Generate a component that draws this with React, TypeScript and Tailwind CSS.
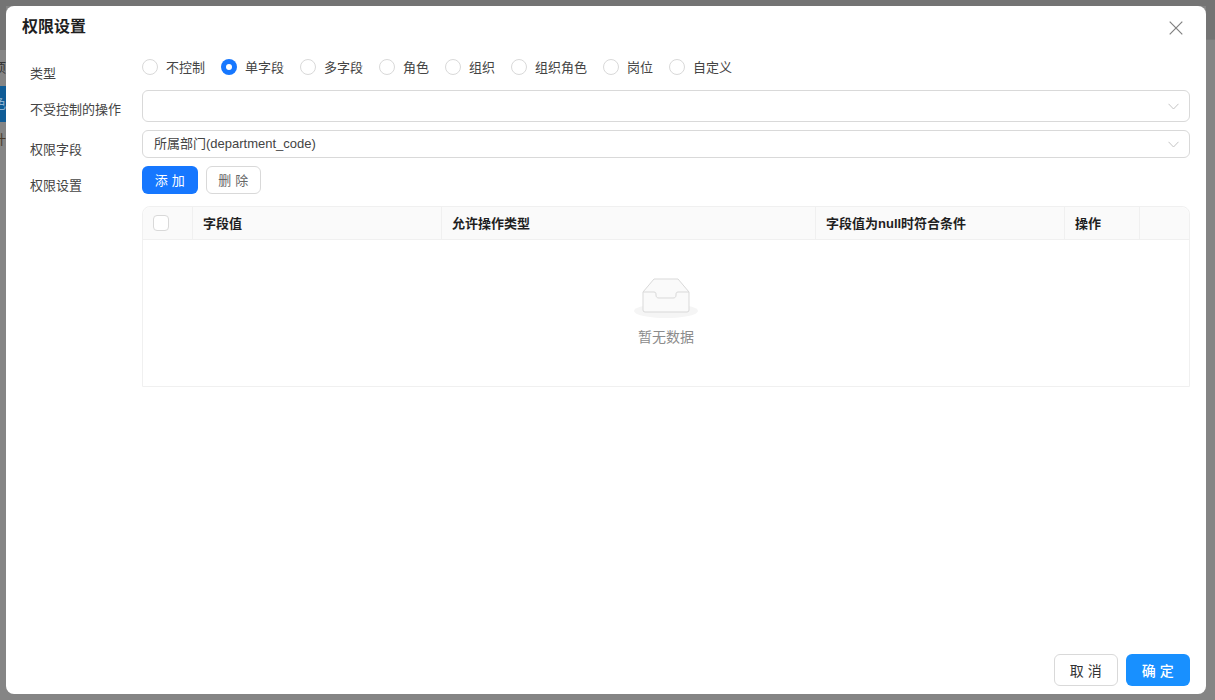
const font = { fontFamily: '"Liberation Sans", "Noto Sans CJK SC", sans-serif' };
const cjk = { fontFamily: '"Noto Sans CJK SC", sans-serif' };

function Radio({ label, checked }: { label: string; checked?: boolean }) {
  return (
    <label className="flex items-center gap-[8px] mr-[16px]">
      {checked ? (
        <span className="w-[16px] h-[16px] rounded-full bg-[#1677ff] flex items-center justify-center">
          <span className="w-[6px] h-[6px] rounded-full bg-white" />
        </span>
      ) : (
        <span className="w-[16px] h-[16px] rounded-full border border-[#d9d9d9] bg-white" />
      )}
      <span className="pt-[2px] text-[13px] leading-[20px] text-[#444]">{label}</span>
    </label>
  );
}

function Chevron() {
  return (
    <svg width="11" height="7" viewBox="0 0 11 7" fill="none" className="shrink-0 ml-[1px] -mr-[1px]">
      <path d="M0.5 0.8 L5.5 6 L10.5 0.8" stroke="#c4c4c4" strokeWidth="1" />
    </svg>
  );
}

export default function App() {
  return (
    <div style={font} className="h-[700px] w-[1215px] overflow-hidden bg-[#858585] flex">
      <div className="w-[6px] shrink-0 flex flex-col overflow-hidden text-[13px] leading-[20px] text-[#333]">
        <div className="h-[50px] bg-[#747474]" />
        <div className="h-[36px] flex items-center justify-end whitespace-nowrap">项</div>
        <div className="h-[36px] bg-[#0f5c96] flex items-center justify-end text-[#8fb3d0] whitespace-nowrap">色</div>
        <div className="h-[36px] flex items-center justify-end whitespace-nowrap text-[#4a3a2a]">计</div>
      </div>
      <div className="w-[1200px] shrink-0 flex flex-col">
        <div className="h-[6px] bg-[#747474]" />
        <div className="w-[1200px] h-[688px] bg-white rounded-[8px] flex flex-col">
          <header className="flex items-center justify-between h-[43px] pl-[16px] pr-[23px]">
            <h1 className="mb-[2px] text-[16px] font-bold leading-[22px] text-[#1f1f1f]">权限设置</h1>
            <svg width="14" height="14" viewBox="0 0 14 14" fill="none" className="mt-[1px]">
              <path d="M0.7 0.7 L13.3 13.3 M13.3 0.7 L0.7 13.3" stroke="#808080" strokeWidth="1.2" />
            </svg>
          </header>
          <div className="flex-1 flex flex-col pl-[24px] pr-[16px]">
            <div className="flex h-[41px]">
              <div className="w-[112px] pt-[15px] text-[13px] leading-[20px] text-[#444]">类型</div>
              <div className="flex-1 flex items-start pt-[7px]">
                <Radio label="不控制" />
                <Radio label="单字段" checked />
                <Radio label="多字段" />
                <Radio label="角色" />
                <Radio label="组织" />
                <Radio label="组织角色" />
                <Radio label="岗位" />
                <Radio label="自定义" />
              </div>
            </div>
            <div className="flex h-[40px]">
              <div className="w-[112px] pt-[10px] text-[13px] leading-[20px] text-[#444]">不受控制的操作</div>
              <div className="flex-1 h-[32px] border border-[#d9d9d9] rounded-[6px] flex items-center justify-end pr-[11px]">
                <Chevron />
              </div>
            </div>
            <div className="flex h-[36px]">
              <div className="w-[112px] pt-[10px] text-[13px] leading-[20px] text-[#444]">权限字段</div>
              <div className="flex-1 h-[28px] border border-[#d9d9d9] rounded-[6px] flex items-center justify-between pl-[11px] pr-[11px]">
                <span className="text-[13px] leading-[20px] text-[#444] -mt-[1px]">所属部门(department_code)</span>
                <Chevron />
              </div>
            </div>
            <div className="flex">
              <div className="w-[112px] pt-[10px] text-[13px] leading-[20px] text-[#444]">权限设置</div>
              <div className="flex-1 flex flex-col">
                <div className="flex gap-[8px]">
                  <button style={cjk} className="w-[56px] h-[28px] rounded-[6px] bg-[#1677ff] text-white text-[13px] tracking-[0.5px]">添 加</button>
                  <button style={cjk} className="w-[55px] h-[28px] rounded-[6px] border border-[#d9d9d9] bg-white text-[#666] text-[13px] tracking-[0.5px]">删 除</button>
                </div>
                <div className="mt-[12px] h-[181px] border border-[#f0f0f0] rounded-t-[8px] flex flex-col">
                  <div className="flex h-[33px] bg-[#fafafa] border-b border-[#f0f0f0] rounded-t-[8px] text-[13px] font-bold text-[#1f1f1f] leading-[33px]">
                    <div className="w-[50px] border-r border-[#f0f0f0] flex items-center pl-[10px]">
                      <span className="w-[16px] h-[16px] rounded-[4px] border border-[#d9d9d9] bg-white" />
                    </div>
                    <div className="w-[249px] border-r border-[#f0f0f0] pl-[10px]">字段值</div>
                    <div className="w-[374px] border-r border-[#f0f0f0] pl-[10px]">允许操作类型</div>
                    <div className="w-[249px] border-r border-[#f0f0f0] pl-[10px]">字段值为null时符合条件</div>
                    <div className="w-[75px] border-r border-[#f0f0f0] pl-[10px]">操作</div>
                    <div className="flex-1" />
                  </div>
                  <div className="flex-1 flex flex-col items-center pt-[38px]">
                    <svg width="64" height="41" viewBox="0 0 64 41" fill="none">
                      <ellipse cx="32" cy="33" rx="32" ry="7" fill="#f5f5f5" />
                      <path d="M9 14 L20 1 H44 L55 14 V32 a2 2 0 0 1 -2 2 H11 a2 2 0 0 1 -2 -2 Z" fill="#fafafa" stroke="#d9d9d9" />
                      <path d="M9 14 H20 c2 0 2 1.500 2 3 c0 2 1 3 3 3 H39 c2 0 3 -1 3 -3 c0 -1.500 0 -3 2 -3 H55" fill="none" stroke="#d9d9d9" />
                    </svg>
                    <div className="mt-[7px] text-[14px] leading-[22px] text-[#8c8c8c]">暂无数据</div>
                  </div>
                </div>
              </div>
            </div>
          </div>
          <footer className="flex justify-end gap-[8px] pr-[16px] pb-[8px]">
            <button style={cjk} className="w-[64px] h-[32px] rounded-[6px] border border-[#d9d9d9] bg-white text-[#333] text-[14px] tracking-[0.5px]">取 消</button>
            <button style={cjk} className="w-[64px] h-[32px] rounded-[6px] bg-[#1890ff] text-white text-[14px] font-medium tracking-[0.5px]">确 定</button>
          </footer>
        </div>
      </div>
      <div className="flex-1 flex flex-col">
        <div className="h-[40px] bg-[#747474] border-b border-[#7a7a7a]" />
      </div>
    </div>
  );
}
